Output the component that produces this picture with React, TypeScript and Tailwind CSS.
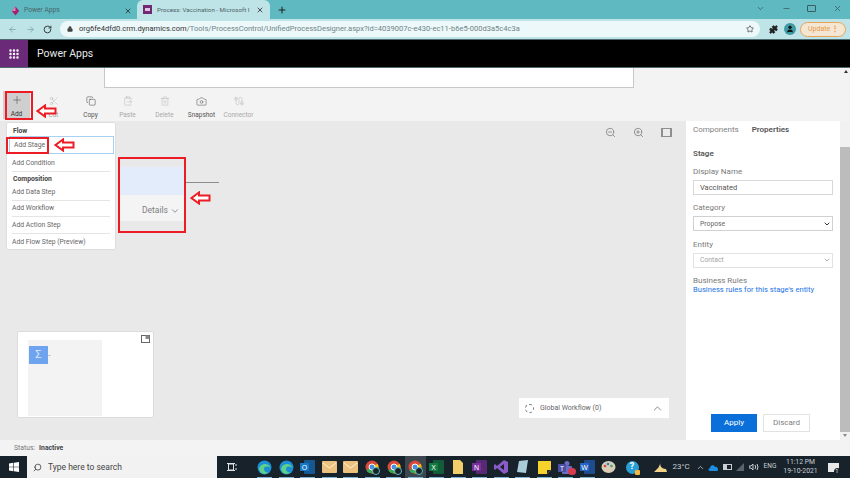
import { ReactNode } from 'react';
import {
  ArrowLeft, ArrowRight, RotateCw, Lock, Star, Puzzle, User, X, Plus, ChevronDown, ChevronUp, Minus,
  Scissors, Copy, ClipboardPaste, Trash2, Camera, Cable, ZoomIn, ZoomOut, Search, Grip,
} from 'lucide-react';

function Slot({ children, active, running = true }: { children: ReactNode; active?: boolean; running?: boolean }) {
  return (
    <div className={`relative flex h-[22px] w-[21.5px] items-center justify-center ${active ? 'bg-[#3b464e]' : ''}`}>
      {children}
      {running && <span className="absolute bottom-0 left-[3px] h-[1.5px] w-[15px] bg-[#7fb3d5]" />}
    </div>
  );
}

function ChromeRing() {
  return (
    <div className="relative h-[14px] w-[14px]">
      <svg width="14" height="14" viewBox="0 0 14 14">
        <circle cx="7" cy="7" r="6.5" fill="#d9493a" />
        <path d="M7 7 L1.4 10.3 A6.5 6.5 0 0 0 7 13.5 Z" fill="#3aa757" />
        <path d="M7 7 L7 13.5 A6.5 6.5 0 0 0 12.6 3.7 Z" fill="#f4c20d" />
        <circle cx="7" cy="7" r="3" fill="#4a90e2" stroke="#fff" strokeWidth="1" />
      </svg>
      <span className="absolute -right-[1px] -bottom-[1px] h-[8px] w-[8px] rounded-full border border-[#5fb9c1] bg-[#17222b]" />
    </div>
  );
}

function Edge() {
  return (
    <svg width="15" height="15" viewBox="0 0 15 15">
      <circle cx="7.5" cy="7.5" r="7" fill="#1b8fd6" />
      <path d="M2 9 C3 3 12 2 13.5 8 C11 6 7 6 7 9 C7 12 10 13 12 12 C8 15.5 3 14 2 9 Z" fill="#5fd08a" />
    </svg>
  );
}

function Mail() {
  return (
    <svg width="15" height="12" viewBox="0 0 15 12">
      <rect width="15" height="12" rx="1" fill="#edc27e" />
      <path d="M1 2 L7.5 7 L14 2" fill="none" stroke="#fff3d9" strokeWidth="1" />
    </svg>
  );
}

function OfficeTile({ color, letter }: { color: string; letter: string }) {
  return (
    <svg width="15" height="14" viewBox="0 0 15 14">
      <rect x="4" width="11" height="14" rx="1" fill={color} opacity="0.65" />
      <rect y="3" width="9" height="8" fill={color} />
      <text x="4.5" y="9.6" fontSize="7" fill="#fff" textAnchor="middle" fontFamily="Liberation Sans">{letter}</text>
    </svg>
  );
}

function RedArrow({ className }: { className: string }) {
  return (
    <svg className={`absolute ${className}`} width="21" height="14" viewBox="0 0 21 14">
      <path d="M1.5 7 L9 1.5 V4.5 H19.5 V9.5 H9 V12.5 Z" fill="#fff" stroke="#ed1c24" strokeWidth="2" />
    </svg>
  );
}

function CommandButton({ label, icon, dim }: { label: string; icon: ReactNode; dim?: boolean }) {
  return (
    <div className={`flex w-[37px] flex-col items-center pt-[2px] ${dim ? 'text-[#a9a9a9]' : 'text-[#555]'}`}>
      <div className="flex h-[16px] items-center">{icon}</div>
      <span className="mt-[1px] text-[6.5px] leading-[10px] whitespace-nowrap">{label}</span>
    </div>
  );
}

function MenuRow({ label, line = true }: { label: string; line?: boolean }) {
  return (
    <div className={`mx-[5px] flex h-[16.5px] items-center text-[6.8px] text-[#666] ${line ? 'border-b border-[#e4e4e4]' : ''}`}>
      {label}
    </div>
  );
}

function Field({ label, children }: { label: string; children: ReactNode }) {
  return (
    <div className="mb-[7.4px]">
      <div className="text-[8px] leading-[12px] text-[#7a7a7a]">{label}</div>
      <div className="mt-[2px]">{children}</div>
    </div>
  );
}

export default function App() {
  return (
    <div className="flex h-[478px] w-[850px] flex-col overflow-hidden bg-[#f3f3f3] font-['Roboto',sans-serif]">
      {/* browser tabs */}
      <div className="flex h-[19px] items-end bg-[#5fb9c1] pl-[4px] text-[#4a6468]">
        <div className="flex h-[17px] w-[133px] items-center pl-[7px] pr-[4px]">
          <svg width="9" height="10" viewBox="0 0 11 11">
            <path d="M5.5 0 L10 5.5 L5.5 11 L1 5.5 Z" fill="#a3226f" />
            <path d="M5.5 0 L1 5.5 L5.5 5.5 Z" fill="#e283b8" />
          </svg>
          <span className="ml-[4px] text-[6.7px]">Power Apps</span>
          <X size={8} strokeWidth={2.5} className="ml-auto mr-[1px] text-[#303030]" />
        </div>
        <div className="flex h-[19px] w-[133px] items-center rounded-t-[6px] bg-[#bfe4e8] pl-[6px] pr-[4px]">
          <span className="flex h-[9px] w-[9px] items-center justify-center bg-[#742774]">
            <span className="h-[3px] w-[5px] bg-[#e0c4e0]" />
          </span>
          <span className="ml-[5px] text-[6.2px] leading-[10px] whitespace-nowrap text-[#4d6266]">Process: Vaccination - Microsoft I</span>
          <X size={8} strokeWidth={2.5} className="ml-auto mr-[2px] text-[#303030]" />
        </div>
        <Plus size={10} strokeWidth={2.5} className="mb-[4px] ml-[7px] text-[#222]" />
        <div className="mb-[6px] ml-auto flex items-center gap-[16.5px] pr-[8.5px] text-[#3a5c60]">
          <ChevronDown size={9} />
          <Minus size={9} />
          <span className="h-[7px] w-[9px] rounded-[1px] border border-[#3a5c60]" />
          <X size={9} />
        </div>
      </div>

      {/* address bar */}
      <div className="flex h-[20px] items-center bg-[#bfe4e8] pl-[8px]">
        <ArrowLeft size={9} className="text-[#7d9ea2]" />
        <ArrowRight size={9} className="ml-[8.5px] text-[#7d9ea2]" />
        <RotateCw size={9} strokeWidth={2.5} className="ml-[8px] text-[#333]" />
        <div className="ml-[8.5px] flex h-[16px] w-[700px] items-center rounded-full bg-[#ecf8f9] pl-[7px] pr-[6px] text-[7.55px]">
          <Lock size={6} fill="#444" className="text-[#444]" />
          <span className="ml-[6px] text-[#333]">org6fe4dfd0.crm.dynamics.com</span>
          <span className="text-[#6f8487]">/Tools/ProcessControl/UnifiedProcessDesigner.aspx?id=4039007c-e430-ec11-b6e5-000d3a5c4c3a</span>
          <Star size={8} strokeWidth={2} className="ml-auto text-[#333]" />
        </div>
        <Puzzle size={9} fill="#222" className="ml-[8.5px] text-[#222]" />
        <span className="ml-[6.5px] flex h-[12px] w-[12px] items-center justify-center rounded-full bg-[#3f9aa3]">
          <User size={8} fill="#111" className="text-[#111]" />
        </span>
        <div className="ml-[4px] flex h-[15px] w-[46px] items-center rounded-full border border-[#e9a45c] bg-[#f5e6d3] pl-[7px] text-[7px] text-[#e59a46]">
          Update
          <span className="ml-auto mr-[6px] text-[8px] leading-none font-bold">⋮</span>
        </div>
      </div>

      {/* power apps header */}
      <div className="flex h-[29px] items-center border-y border-[#4f6a6e] bg-black">
        <div className="flex h-full w-[28px] items-center justify-center bg-[#6b2a78]">
          <Grip size={12} strokeWidth={3} className="text-white" />
        </div>
        <span className="mt-[1px] ml-[9px] text-[10.5px] text-[#e8e8e8]">Power Apps</span>
      </div>

      {/* form strip */}
      <div className="h-[20px] shrink-0 pl-[104px]">
        <div className="h-[20px] w-[530px] border-r border-b border-l border-[#c8c8c8] bg-white" />
      </div>

      {/* command bar */}
      <div className="flex h-[33px] shrink-0 items-start pt-[3px]">
        <div className="ml-[3px] flex h-[28px] w-[27px] flex-col items-center bg-[#cfcfcf] pt-[3px] text-[#555]">
          <Plus size={12} strokeWidth={1.2} />
          <span className="mt-[4px] text-[6.5px] leading-[8px] text-[#333]">Add</span>
        </div>
        <div className="flex pl-[5px]">
          <CommandButton label="Cut" dim icon={<Scissors size={10} strokeWidth={1} />} />
          <CommandButton label="Copy" icon={<Copy size={10} strokeWidth={1.4} />} />
          <CommandButton label="Paste" dim icon={<ClipboardPaste size={10} strokeWidth={1} />} />
          <CommandButton label="Delete" dim icon={<Trash2 size={10} strokeWidth={1} />} />
          <CommandButton label="Snapshot" icon={<Camera size={11} strokeWidth={1.2} />} />
          <CommandButton label="Connector" dim icon={<Cable size={10} strokeWidth={1} />} />
        </div>
      </div>

      {/* workspace */}
      <div className="relative flex h-[319px] shrink-0">
        <div className="relative w-[686px] bg-[#e9e9e9]">
          <div className="absolute top-[6px] left-[605px] flex items-center text-[#8a8a8a]">
            <ZoomOut size={11} />
            <ZoomIn size={11} className="ml-[17px]" />
            <svg className="ml-[17px]" width="11" height="9" viewBox="0 0 11 9">
              <rect width="11" height="9" fill="#8f8f8f" />
              <rect x="2" y="1" width="7" height="7" fill="#ececec" />
            </svg>
          </div>

          {/* stage node */}
          <div className="absolute top-[46px] left-[120px] w-[64px]">
            <div className="h-[28px] bg-[#e2ecfb]" />
            <div className="flex h-[26px] items-center justify-end gap-[2px] bg-[#f4f4f4] pt-[5px] pr-[4px] text-[8.5px] text-[#808080]">
              Details <ChevronDown size={10} />
            </div>
          </div>
          <div className="absolute top-[61px] left-[186px] h-px w-[33px] bg-[#8c8c8c]" />

          {/* minimap */}
          <div className="absolute top-[210px] left-[17px] h-[87px] w-[137px] rounded-[2px] border border-[#dcdcdc] bg-white">
            <div className="absolute top-[8px] left-[10px] h-[76px] w-[74px] bg-[#f3f3f3]" />
            <div className="absolute top-[14px] left-[11px] flex h-[18px] w-[19px] items-center justify-center bg-[#6ea3f0] text-[11px] text-[#dce9fb]">Σ</div>
            <div className="absolute top-[23px] left-[30px] h-px w-[3px] bg-[#c8c8c8]" />
            <svg className="absolute top-[3px] right-[3px]" width="9" height="8" viewBox="0 0 9 8">
              <rect x="0.5" y="0.5" width="8" height="7" fill="none" stroke="#666" />
              <rect x="4.5" y="0.5" width="4" height="3.5" fill="#888" />
            </svg>
          </div>

          {/* global workflow */}
          <div className="absolute top-[277px] left-[519px] flex h-[20px] w-[150px] items-center bg-white pl-[6px] pr-[5px] text-[7px] text-[#666]">
            <span className="h-[9px] w-[9px] rounded-full border border-dashed border-[#777]" />
            <span className="ml-[6px]">Global Workflow (0)</span>
            <ChevronUp size={13} strokeWidth={1.4} className="ml-auto" />
          </div>
        </div>

        {/* properties panel */}
        <div className="flex w-[154px] flex-col bg-white px-[7px] pt-[3px]">
          <div className="flex text-[8px]">
            <span className="text-[#808080]">Components</span>
            <span className="ml-[13px] font-semibold text-[#555]">Properties</span>
          </div>
          <div className="mt-[12px] mb-[6px] text-[8px] font-semibold text-[#555]">Stage</div>
          <Field label="Display Name">
            <div className="flex h-[15px] items-center border border-[#d8d8d8] pl-[6px] text-[7.5px] text-[#555]">Vaccinated</div>
          </Field>
          <Field label="Category">
            <div className="flex h-[15px] items-center justify-between border border-[#d0d0d0] pr-[1px] pl-[6px] text-[6.8px] text-[#666]">
              Propose <ChevronDown size={8} strokeWidth={3} className="text-[#333]" />
            </div>
          </Field>
          <Field label="Entity">
            <div className="flex h-[15px] items-center justify-between border border-[#e2e2e2] pr-[1px] pl-[6px] text-[6.8px] text-[#a5a5a5]">
              Contact <ChevronDown size={8} strokeWidth={2} className="text-[#888]" />
            </div>
          </Field>
          <div className="mt-[1px] text-[8px] leading-[9px] text-[#7a7a7a]">Business Rules</div>
          <div className="text-[7.6px] leading-[9px] whitespace-nowrap text-[#1a73e8]">Business rules for this stage's entity</div>
          <div className="mt-auto mb-[8px] flex gap-[6px] pl-[18px]">
            <div className="flex h-[18px] w-[46px] items-center justify-center bg-[#0a6fd8] text-[8px] text-white">Apply</div>
            <div className="flex h-[18px] w-[47px] items-center justify-center border border-[#e2e2e2] text-[8px] text-[#808080]">Discard</div>
          </div>
        </div>

        {/* scrollbar */}
        <div className="relative flex w-[10px] flex-col items-center bg-[#f1f1f1]">
          <div className="h-[26px] w-full" />
          <div className="h-[285px] w-full bg-[#bcbcbc]" />
          <span className="absolute bottom-[3px] left-[3px] h-0 w-0 border-x-[2.5px] border-t-[3px] border-x-transparent border-t-[#8a8a8a]" />
        </div>
        <span className="absolute top-[-51px] right-[2px] h-0 w-0 border-x-[2.5px] border-b-[3px] border-x-transparent border-b-[#333]" />

        {/* add menu */}
        <div className="absolute top-[1px] left-[6px] h-[128px] w-[110px] rounded-[2px] border border-[#dedede] bg-white">
          <div className="ml-[6px] flex h-[13px] items-end text-[6.8px] leading-[9px] font-bold text-[#444]">Flow</div>
          <div className="ml-[2px] flex h-[18px] w-[105px] items-center border border-[#a8d0f0] pl-[4px] text-[6.8px] text-[#666]">Add Stage</div>
          <div className="h-[17px] pt-[1px]"><MenuRow label="Add Condition" /></div>
          <div className="ml-[6px] flex h-[13px] items-end text-[6.8px] leading-[9px] font-bold text-[#444]">Composition</div>
          <MenuRow label="Add Data Step" />
          <MenuRow label="Add Workflow" />
          <MenuRow label="Add Action Step" />
          <MenuRow label="Add Flow Step (Preview)" line={false} />
        </div>

        {/* annotations */}
        <div className="absolute top-[16px] left-[6px] h-[17px] w-[43px] border-2 border-[#ed1c24]" />
        <div className="absolute top-[36px] left-[118px] h-[76px] w-[68px] border-2 border-[#ed1c24]" />
        <RedArrow className="top-[17px] left-[54px]" />
        <RedArrow className="top-[70px] left-[190px]" />
        <div className="absolute top-[-30px] left-[5px] h-[29px] w-[28px] border-2 border-[#ed1c24]" />
        <RedArrow className="top-[-17px] left-[36px]" />
      </div>

      {/* status */}
      <div className="flex h-[16px] shrink-0 items-center pl-[14px] text-[6.8px] text-[#777]">
        Status:<span className="ml-[4px] font-bold text-[#444]">Inactive</span>
      </div>

      {/* taskbar */}
      <div className="flex h-[22px] shrink-0 items-center bg-[#17222b] text-[#dfe3e6]">
        <div className="flex w-[27px] justify-center">
          <svg width="10" height="10" viewBox="0 0 10 10" fill="#fff">
            <path d="M0 1.4 L4.4 0.8 V4.8 H0 Z M5 0.7 L10 0 V4.8 H5 Z M0 5.3 H4.4 V9.2 L0 8.6 Z M5 5.3 H10 V10 L5 9.3 Z" />
          </svg>
        </div>
        <div className="flex h-full w-[190px] items-center bg-[#f2f2f2] pl-[6px] text-[8.5px] text-[#444]">
          <Search size={9} className="-scale-x-100 text-[#333]" />
          <span className="ml-[6px]">Type here to search</span>
        </div>
        <div className="flex h-full w-[29px] items-center justify-center">
          <svg width="10" height="10" viewBox="0 0 10 10" fill="none" stroke="#dfe3e6">
            <rect x="1.5" y="2" width="5" height="6" />
            <path d="M0 1.5 H8 M0 8.5 H8 M9 2 V4 M9 6 V8" />
          </svg>
        </div>
        <div className="ml-[8px] flex items-center">
          <Slot><Edge /></Slot>
          <Slot><Edge /></Slot>
          <Slot><OfficeTile color="#1477c9" letter="O" /></Slot>
          <Slot><Mail /></Slot>
          <Slot><Mail /></Slot>
          <Slot><ChromeRing /></Slot>
          <Slot><ChromeRing /></Slot>
          <Slot active><ChromeRing /></Slot>
          <Slot><OfficeTile color="#107c41" letter="X" /></Slot>
          <Slot><svg width="10" height="14" viewBox="0 0 10 14"><path d="M0 0 H7 L10 3 V14 H0 Z" fill="#f0cf6b" /></svg></Slot>
          <Slot><OfficeTile color="#7b2f9e" letter="N" /></Slot>
          <Slot><svg width="14" height="14" viewBox="0 0 14 14"><path d="M10 0 L14 2 V12 L10 14 L3 8 L1 10 L0 9 V5 L1 4 L3 6 Z M10 4 L6 7 L10 10 Z" fill="#8a5bc6" /></svg></Slot>
          <Slot><svg width="13" height="14" viewBox="0 0 13 14"><path d="M3 1 L12 0 L10 13 L1 12 Z" fill="#a9ccd8" /></svg></Slot>
          <Slot><svg width="13" height="13" viewBox="0 0 13 13"><path d="M0 0 H13 V9 L9 13 H0 Z" fill="#f7d22c" /><path d="M9 13 V9 H13 Z" fill="#1d2b33" /></svg></Slot>
          <Slot>
            <div className="relative">
              <svg width="15" height="13" viewBox="0 0 15 13">
                <circle cx="9" cy="2.5" r="2.5" fill="#6a6fc4" />
                <rect x="4" y="5" width="10" height="8" rx="1" fill="#6a6fc4" />
                <rect y="3" width="8" height="8" fill="#4b4fa6" />
                <text x="4" y="9.5" fontSize="6.5" fill="#fff" textAnchor="middle" fontFamily="Liberation Sans">T</text>
              </svg>
              <span className="absolute -right-[3px] -bottom-[1px] h-[7px] w-[8px] rounded-full bg-[#d83b4e]" />
            </div>
          </Slot>
          <Slot><OfficeTile color="#2464c4" letter="W" /></Slot>
          <Slot running={false}>
            <svg width="15" height="14" viewBox="0 0 15 14">
              <ellipse cx="7.5" cy="7" rx="7" ry="6" fill="#d9cdb5" />
              <circle cx="4" cy="6" r="1.3" fill="#d9493a" /><circle cx="7" cy="4" r="1.3" fill="#2f7fd1" /><circle cx="10.5" cy="6" r="1.3" fill="#4aa564" />
            </svg>
          </Slot>
          <div className="relative ml-[6px]">
            <span className="flex h-[13px] w-[13px] items-center justify-center rounded-full bg-[#2a9fd6] text-[9px] font-bold text-white">?</span>
            <span className="absolute -right-[1px] -bottom-[1px] h-[5px] w-[5px] rounded-[1px] bg-[#f2b840]" />
          </div>
        </div>

        {/* tray */}
        <div className="ml-auto flex h-full items-center text-[#c9ced2]">
          <div className="flex w-[15px] justify-center">
            <svg width="13" height="12" viewBox="0 0 13 12"><path d="M7 0 C5 4 7 8 12 8 L13 11 H0 L3 8 C5 7 6 3 7 0 Z" fill="#f2d388" /></svg>
          </div>
          <span className="w-[26px] text-center text-[8px]">23°C</span>
          <div className="flex w-[12px] justify-center"><ChevronUp size={9} /></div>
          <div className="flex w-[14px] justify-center">
            <svg width="11" height="7" viewBox="0 0 11 7"><path d="M2 7 C0 7 0 4 2 4 C2 1 6 0 7 3 C10 2 11 7 9 7 Z" fill="#1e8ee0" /></svg>
          </div>
          <div className="flex w-[14px] justify-center">
            <span className="h-[6px] w-[9px] border border-[#c9ced2] bg-[linear-gradient(90deg,#c9ced2_50%,transparent_50%)]" />
          </div>
          <div className="flex w-[13px] justify-center">
            <svg width="9" height="8" viewBox="0 0 9 8"><path d="M0 8 L8 0 V8 Z" fill="#59636a" /></svg>
          </div>
          <div className="flex w-[13px] justify-center">
            <svg width="10" height="8" viewBox="0 0 10 8" fill="none" stroke="#c9ced2"><path d="M0 3 H2 L4 1 V7 L2 5 H0 Z M6 2 Q7.5 4 6 6 M8 1 Q10 4 8 7" /></svg>
          </div>
          <span className="w-[20px] text-center text-[6.5px]">ENG</span>
          <div className="flex w-[41px] flex-col items-center text-[6.8px] leading-[9px] whitespace-nowrap">
            <span>11:12 PM</span>
            <span>19-10-2021</span>
          </div>
          <div className="flex w-[29px] justify-center pr-[5px]">
            <div className="relative h-[9px] w-[11px] border border-[#e8e8e8] bg-[#e8e8e8]">
              <span className="absolute -right-[3px] -bottom-[4px] flex h-[7px] w-[7px] items-center justify-center rounded-full bg-[#17222b] text-[5px] leading-none text-white">1</span>
            </div>
          </div>
        </div>
      </div>
    </div>
  );
}
